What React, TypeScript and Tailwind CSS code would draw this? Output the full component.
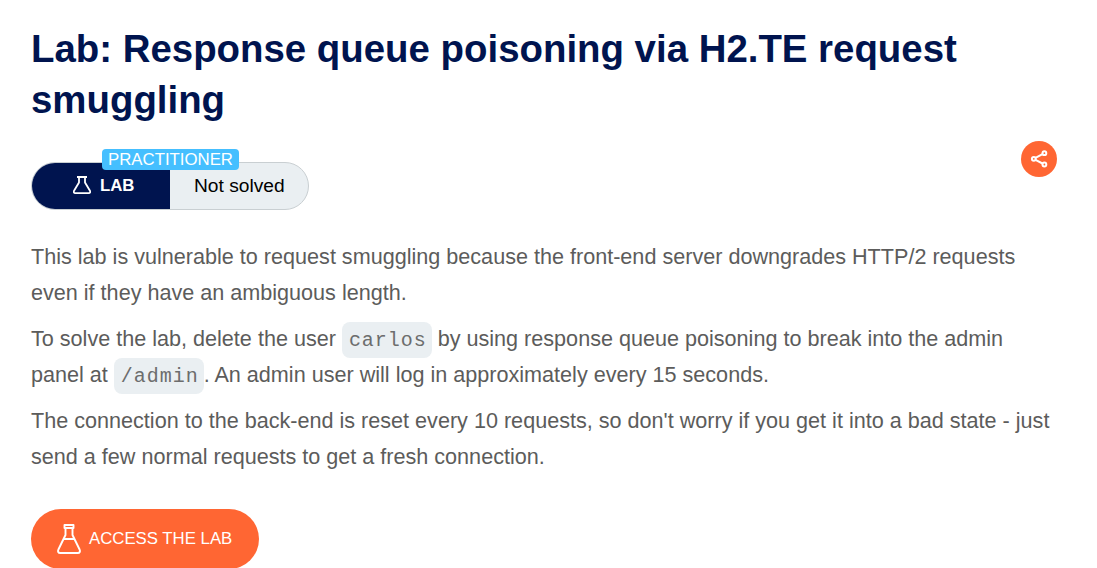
function Flask({ className, level }: { className: string; level?: boolean }) {
  return level ? (
    <svg className={className} viewBox="0 0 24 30" fill="none" stroke="currentColor" strokeWidth="1.9" strokeLinejoin="round" strokeLinecap="round">
      <path d="M7.500 1H16.500V4H7.500ZM8.500 4V11L1.400 25.500C.6 27.500 1.200 29 3.200 29H20.800C22.800 29 23.400 27.500 22.600 25.500L15.500 11V4M7 15H17" />
    </svg>
  ) : (
    <svg className={className} viewBox="0 0 18 18" fill="none" stroke="currentColor" strokeWidth="1.8" strokeLinejoin="round">
      <path d="M4 1H14M6 1V6.500L1.200 14.500C.3 16 .9 17.100 2.300 17.100H15.700C17.100 17.100 17.700 16 16.800 14.500L12 6.500V1" />
    </svg>
  );
}

function Code({ children }: { children: string }) {
  return (
    <code className="mb-[-1px] mt-px inline-block h-9 rounded-lg bg-[#eaeff2] pl-[7px] pr-[5px] align-top font-['Liberation_Mono','Courier_New',monospace] text-[20px] leading-[37px] tracking-[0.96px] text-[#6c6d6d]">
      {children}
    </code>
  );
}

export default function App() {
  return (
    <main className="h-[568px] overflow-hidden bg-white pl-[31px] pr-10 pt-[23px] font-['Liberation_Sans',Arial,sans-serif]">
      <h1 className="text-[38.4px] font-bold leading-[51px] text-[#00144f]">
        Lab: Response queue poisoning via H2.TE request
        <br />
        smuggling
      </h1>

      <div className="mt-4 flex items-start justify-between">
        <div className="relative mt-[21px] flex h-12 w-[278px] rounded-full border border-[#c9cfd2] bg-[#eaeff2]">
          <div className="flex w-[138px] items-center rounded-l-full bg-[#00144f] pl-[41px] font-bold text-white">
            <Flask className="mr-[9px] size-[18px] -translate-y-px" />
            <span className="text-[16.8px]">LAB</span>
          </div>
          <div className="flex flex-1 items-center pl-6 text-[19.2px] text-black">Not solved</div>
          <span className="absolute -top-[14px] left-[70px] h-[21px] w-[137px] rounded bg-[#45bfff] text-center text-[16.8px] leading-[21px] text-white">
            PRACTITIONER
          </span>
        </div>
        <button aria-label="Share" className="flex size-9 items-center justify-center rounded-full bg-[#ff6633] text-white">
          <svg className="size-[18px]" viewBox="0 0 18 18" fill="none" stroke="currentColor" strokeWidth="2">
            <path d="M5.500 7.800L12.500 4.100M5.500 9.800L12.500 13.500" />
            <circle cx="3.800" cy="8.800" r="1.900" />
            <circle cx="14.400" cy="3.200" r="1.900" />
            <circle cx="14.400" cy="14.500" r="1.900" />
          </svg>
        </button>
      </div>

      <div className="mt-[29px] space-y-2.5 whitespace-nowrap text-[21.6px] leading-9 text-[#5c5c5b]">
        <p>
          This lab is vulnerable to request smuggling because the front-end server downgrades HTTP/2 requests
          <br />
          even if they have an ambiguous length.
        </p>
        <p>
          To solve the lab, delete the user <Code>carlos</Code> by using response queue poisoning to break into the admin
          <br />
          panel at <Code>/admin</Code>. An admin user will log in approximately every 15 seconds.
        </p>
        <p>
          The connection to the back-end is reset every 10 requests, so don't worry if you get it into a bad state - just
          <br />
          send a few normal requests to get a fresh connection.
        </p>
      </div>

      <button className="mt-[34px] flex h-[60px] w-[228px] items-center rounded-full bg-[#ff6633] pl-[25.500px] text-[16.8px] text-white">
        <Flask level className="mr-[8.500px] h-[30px] w-6" />
        ACCESS THE LAB
      </button>
    </main>
  );
}
